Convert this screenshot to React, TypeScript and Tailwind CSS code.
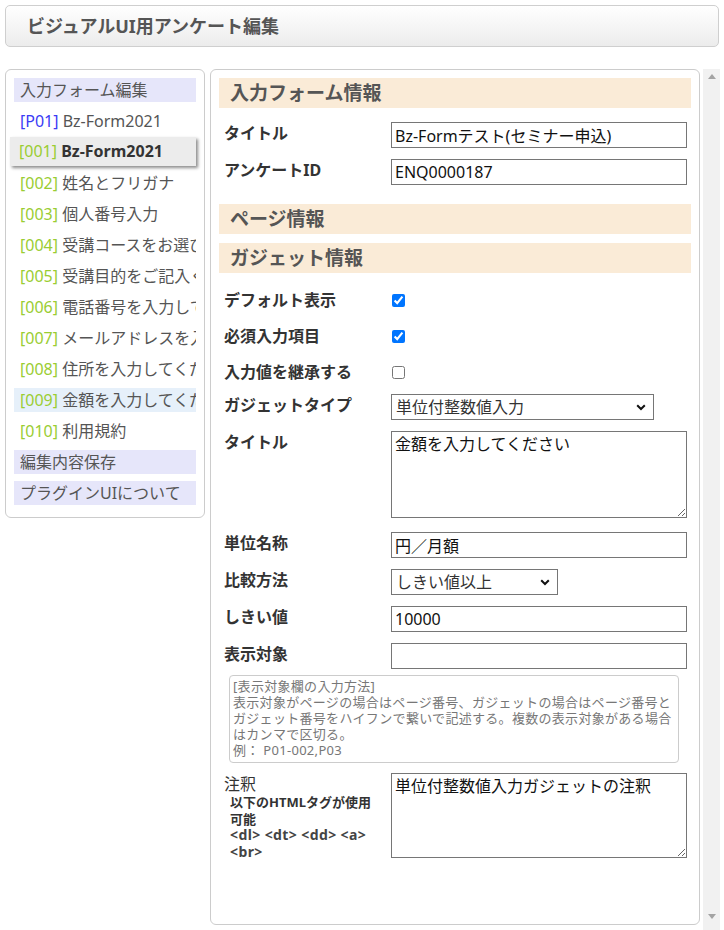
import React from "react";

const FONT = "font-['Noto_Sans','Noto_Sans_CJK_JP',sans-serif]";

type Item = { tag?: string; tagColor?: string; text: string; kind: "plain" | "head" | "selected" | "hover" };

const items: Item[] = [
  { text: "入力フォーム編集", kind: "head" },
  { tag: "[P01]", tagColor: "text-[#3b3bf5]", text: "Bz-Form2021", kind: "plain" },
  { tag: "[001]", tagColor: "text-[#9acd32]", text: "Bz-Form2021", kind: "selected" },
  { tag: "[002]", tagColor: "text-[#9acd32]", text: "姓名とフリガナ", kind: "plain" },
  { tag: "[003]", tagColor: "text-[#9acd32]", text: "個人番号入力", kind: "plain" },
  { tag: "[004]", tagColor: "text-[#9acd32]", text: "受講コースをお選びください", kind: "plain" },
  { tag: "[005]", tagColor: "text-[#9acd32]", text: "受講目的をご記入ください", kind: "plain" },
  { tag: "[006]", tagColor: "text-[#9acd32]", text: "電話番号を入力してください", kind: "plain" },
  { tag: "[007]", tagColor: "text-[#9acd32]", text: "メールアドレスを入力してください", kind: "plain" },
  { tag: "[008]", tagColor: "text-[#9acd32]", text: "住所を入力してください", kind: "plain" },
  { tag: "[009]", tagColor: "text-[#9acd32]", text: "金額を入力してください", kind: "hover" },
  { tag: "[010]", tagColor: "text-[#9acd32]", text: "利用規約", kind: "plain" },
  { text: "編集内容保存", kind: "head" },
  { text: "プラグインUIについて", kind: "head" },
];

function MenuRow({ it }: { it: Item }) {
  if (it.kind === "selected") {
    return (
      <div className="h-[31px] flex items-center">
        <div className="h-[29px] w-[189px] -ml-[4px] pl-[9px] bg-[#ececec] shadow-[2px_2px_3px_rgba(0,0,0,0.45)] leading-[29px] text-[16px] whitespace-nowrap overflow-hidden">
          <span className={it.tagColor}>{it.tag}</span>{" "}
          <span className="font-bold text-[#333]">{it.text}</span>
        </div>
      </div>
    );
  }
  const bg =
    it.kind === "head" ? "bg-[#e6e6fa]" : it.kind === "hover" ? "bg-[#e6f0fa]" : "bg-transparent";
  return (
    <div className="h-[31px] flex items-center">
      <div
        className={`h-[24px] w-[182px] pl-[6px] ${bg} leading-[24px] text-[16px] text-[#555] whitespace-nowrap overflow-hidden`}
      >
        {it.tag && <span className={it.tagColor}>{it.tag}</span>}
        {it.tag ? " " : ""}
        {it.text}
      </div>
    </div>
  );
}

function SectionHead({ children, className = "" }: { children: React.ReactNode; className?: string }) {
  return (
    <div className={`h-[30px] bg-[#faebd7] pl-[11px] leading-[30px] text-[19px] font-bold text-[#555] ${className}`}>
      {children}
    </div>
  );
}

function Label({ children }: { children: React.ReactNode }) {
  return (
    <div className="w-[172px] shrink-0 pl-[5px] leading-[22px] text-[16px] font-bold text-[#333]">{children}</div>
  );
}

function InputRow({ label, value }: { label: string; value: string }) {
  return (
    <div className="h-[37px] pt-[5px] flex items-start">
      <Label>{label}</Label>
      <input
        readOnly
        value={value}
        className="w-[296px] h-[26px] border border-[#767676] px-[3px] text-[16px] text-[#111] outline-none bg-white"
      />
    </div>
  );
}

function Chevron() {
  return (
    <svg width="10" height="7" viewBox="0 0 10 7" className="absolute right-[8px] top-[10px] pointer-events-none">
      <path d="M1.2 1.2 L5 5 L8.8 1.2" fill="none" stroke="#111" strokeWidth="2" />
    </svg>
  );
}

function SelectBox({ width, value }: { width: string; value: string }) {
  return (
    <div className={`relative ${width} h-[26px]`}>
      <select
        defaultValue={value}
        className="appearance-none w-full h-full border border-[#767676] pl-[4px] pr-[20px] text-[16px] text-[#333] bg-white outline-none rounded-none"
      >
        <option>{value}</option>
      </select>
      <Chevron />
    </div>
  );
}

function CheckRow({ label, checked }: { label: string; checked: boolean }) {
  return (
    <div className="h-[36px] flex items-center">
      <Label>{label}</Label>
      <input type="checkbox" defaultChecked={checked} className="w-[13px] h-[13px] m-0 ml-[1px] accent-[#0075ff]" />
    </div>
  );
}

export default function App() {
  return (
    <div className={`w-[724px] h-[930px] bg-white overflow-hidden ${FONT}`}>
      <div className="pt-[5px] px-[5px]">
        <div className="h-[42px] rounded-[5px] border border-[#cfcfcf] bg-gradient-to-b from-white to-[#ececec] flex items-center pl-[21px] text-[18px] font-bold text-[#555]">
          ビジュアルUI用アンケート編集
        </div>
      </div>

      <div className="flex items-start mt-[22px] pl-[5px]">
        {/* Left menu */}
        <div className="w-[200px] border border-[#ccc] rounded-[6px] pt-[4px] pb-[9px] px-[8px]">
          {items.map((it, i) => (
            <MenuRow key={i} it={it} />
          ))}
        </div>

        {/* Right panel */}
        <div className="ml-[5px] w-[490px] h-[856px] border border-[#ccc] rounded-[6px] pt-[8px] px-[8px]">
          <SectionHead>入力フォーム情報</SectionHead>
          <div className="mt-[9px]">
            <InputRow label="タイトル" value="Bz-Formテスト(セミナー申込)" />
            <InputRow label="アンケートID" value="ENQ0000187" />
          </div>
          <SectionHead className="mt-[13px]">ページ情報</SectionHead>
          <SectionHead className="mt-[9px]">ガジェット情報</SectionHead>
          <div className="mt-[9px]">
            <CheckRow label="デフォルト表示" checked />
            <CheckRow label="必須入力項目" checked />
            <CheckRow label="入力値を継承する" checked={false} />
          </div>
          <div className="h-[37px] pt-[4px] flex items-start">
            <Label>ガジェットタイプ</Label>
            <SelectBox width="w-[263px]" value="単位付整数値入力" />
          </div>
          <div className="pt-[4px] pb-[9px] flex items-start">
            <Label>タイトル</Label>
            <textarea
              readOnly
              defaultValue="金額を入力してください"
              className="w-[296px] h-[87px] border border-[#767676] px-[3px] py-[1px] text-[16px] leading-[22px] text-[#111] outline-none"
            />
          </div>
          <InputRow label="単位名称" value="円／月額" />
          <div className="h-[37px] pt-[5px] flex items-start">
            <Label>比較方法</Label>
            <SelectBox width="w-[167px]" value="しきい値以上" />
          </div>
          <InputRow label="しきい値" value="10000" />
          <InputRow label="表示対象" value="" />
          <div className="ml-[10px] w-[450px] h-[88px] border border-[#ccc] rounded-[4px] pt-[2px] px-[3px] text-[13px] leading-[16px] tracking-[0.3px] text-[#777] whitespace-nowrap">
            [表示対象欄の入力方法]
            <br />
            表示対象がページの場合はページ番号、ガジェットの場合はページ番号と
            <br />
            ガジェット番号をハイフンで繋いで記述する。複数の表示対象がある場合
            <br />
            はカンマで区切る。
            <br />
            例： P01-002,P03
          </div>
          <div className="mt-[10px] flex items-start">
            <div className="w-[172px] shrink-0 pl-[5px] text-[#333]">
              <div className="h-[20px] leading-[20px] mt-[1px] text-[16px]">注釈</div>
              <div className="pl-[6px] text-[13px] leading-[16.5px] font-bold text-[#333] whitespace-nowrap">
                以下のHTMLタグが使用
                <br />
                可能
                <br />
                <span className="text-[14px] tracking-[0.4px] text-[#444]">&lt;dl&gt; &lt;dt&gt; &lt;dd&gt; &lt;a&gt;</span>
                <br />
                <span className="text-[14px] tracking-[0.4px] text-[#444]">&lt;br&gt;</span>
              </div>
            </div>
            <textarea
              readOnly
              defaultValue="単位付整数値入力ガジェットの注釈"
              className="w-[296px] h-[85px] border border-[#767676] px-[3px] py-[1px] text-[16px] leading-[22px] text-[#111] outline-none"
            />
          </div>
        </div>

        {/* Scrollbar */}
        <div className="ml-[3px] w-[17px] h-[861px] bg-[#f1f1f1] flex flex-col items-center justify-between pt-[5px] pb-[11px]">
          <svg width="8" height="5" viewBox="0 0 8 5">
            <path d="M0 5 L4 0 L8 5 Z" fill="#a3a3a3" />
          </svg>
          <svg width="8" height="5" viewBox="0 0 8 5">
            <path d="M0 0 L8 0 L4 5 Z" fill="#a3a3a3" />
          </svg>
        </div>
      </div>
    </div>
  );
}
